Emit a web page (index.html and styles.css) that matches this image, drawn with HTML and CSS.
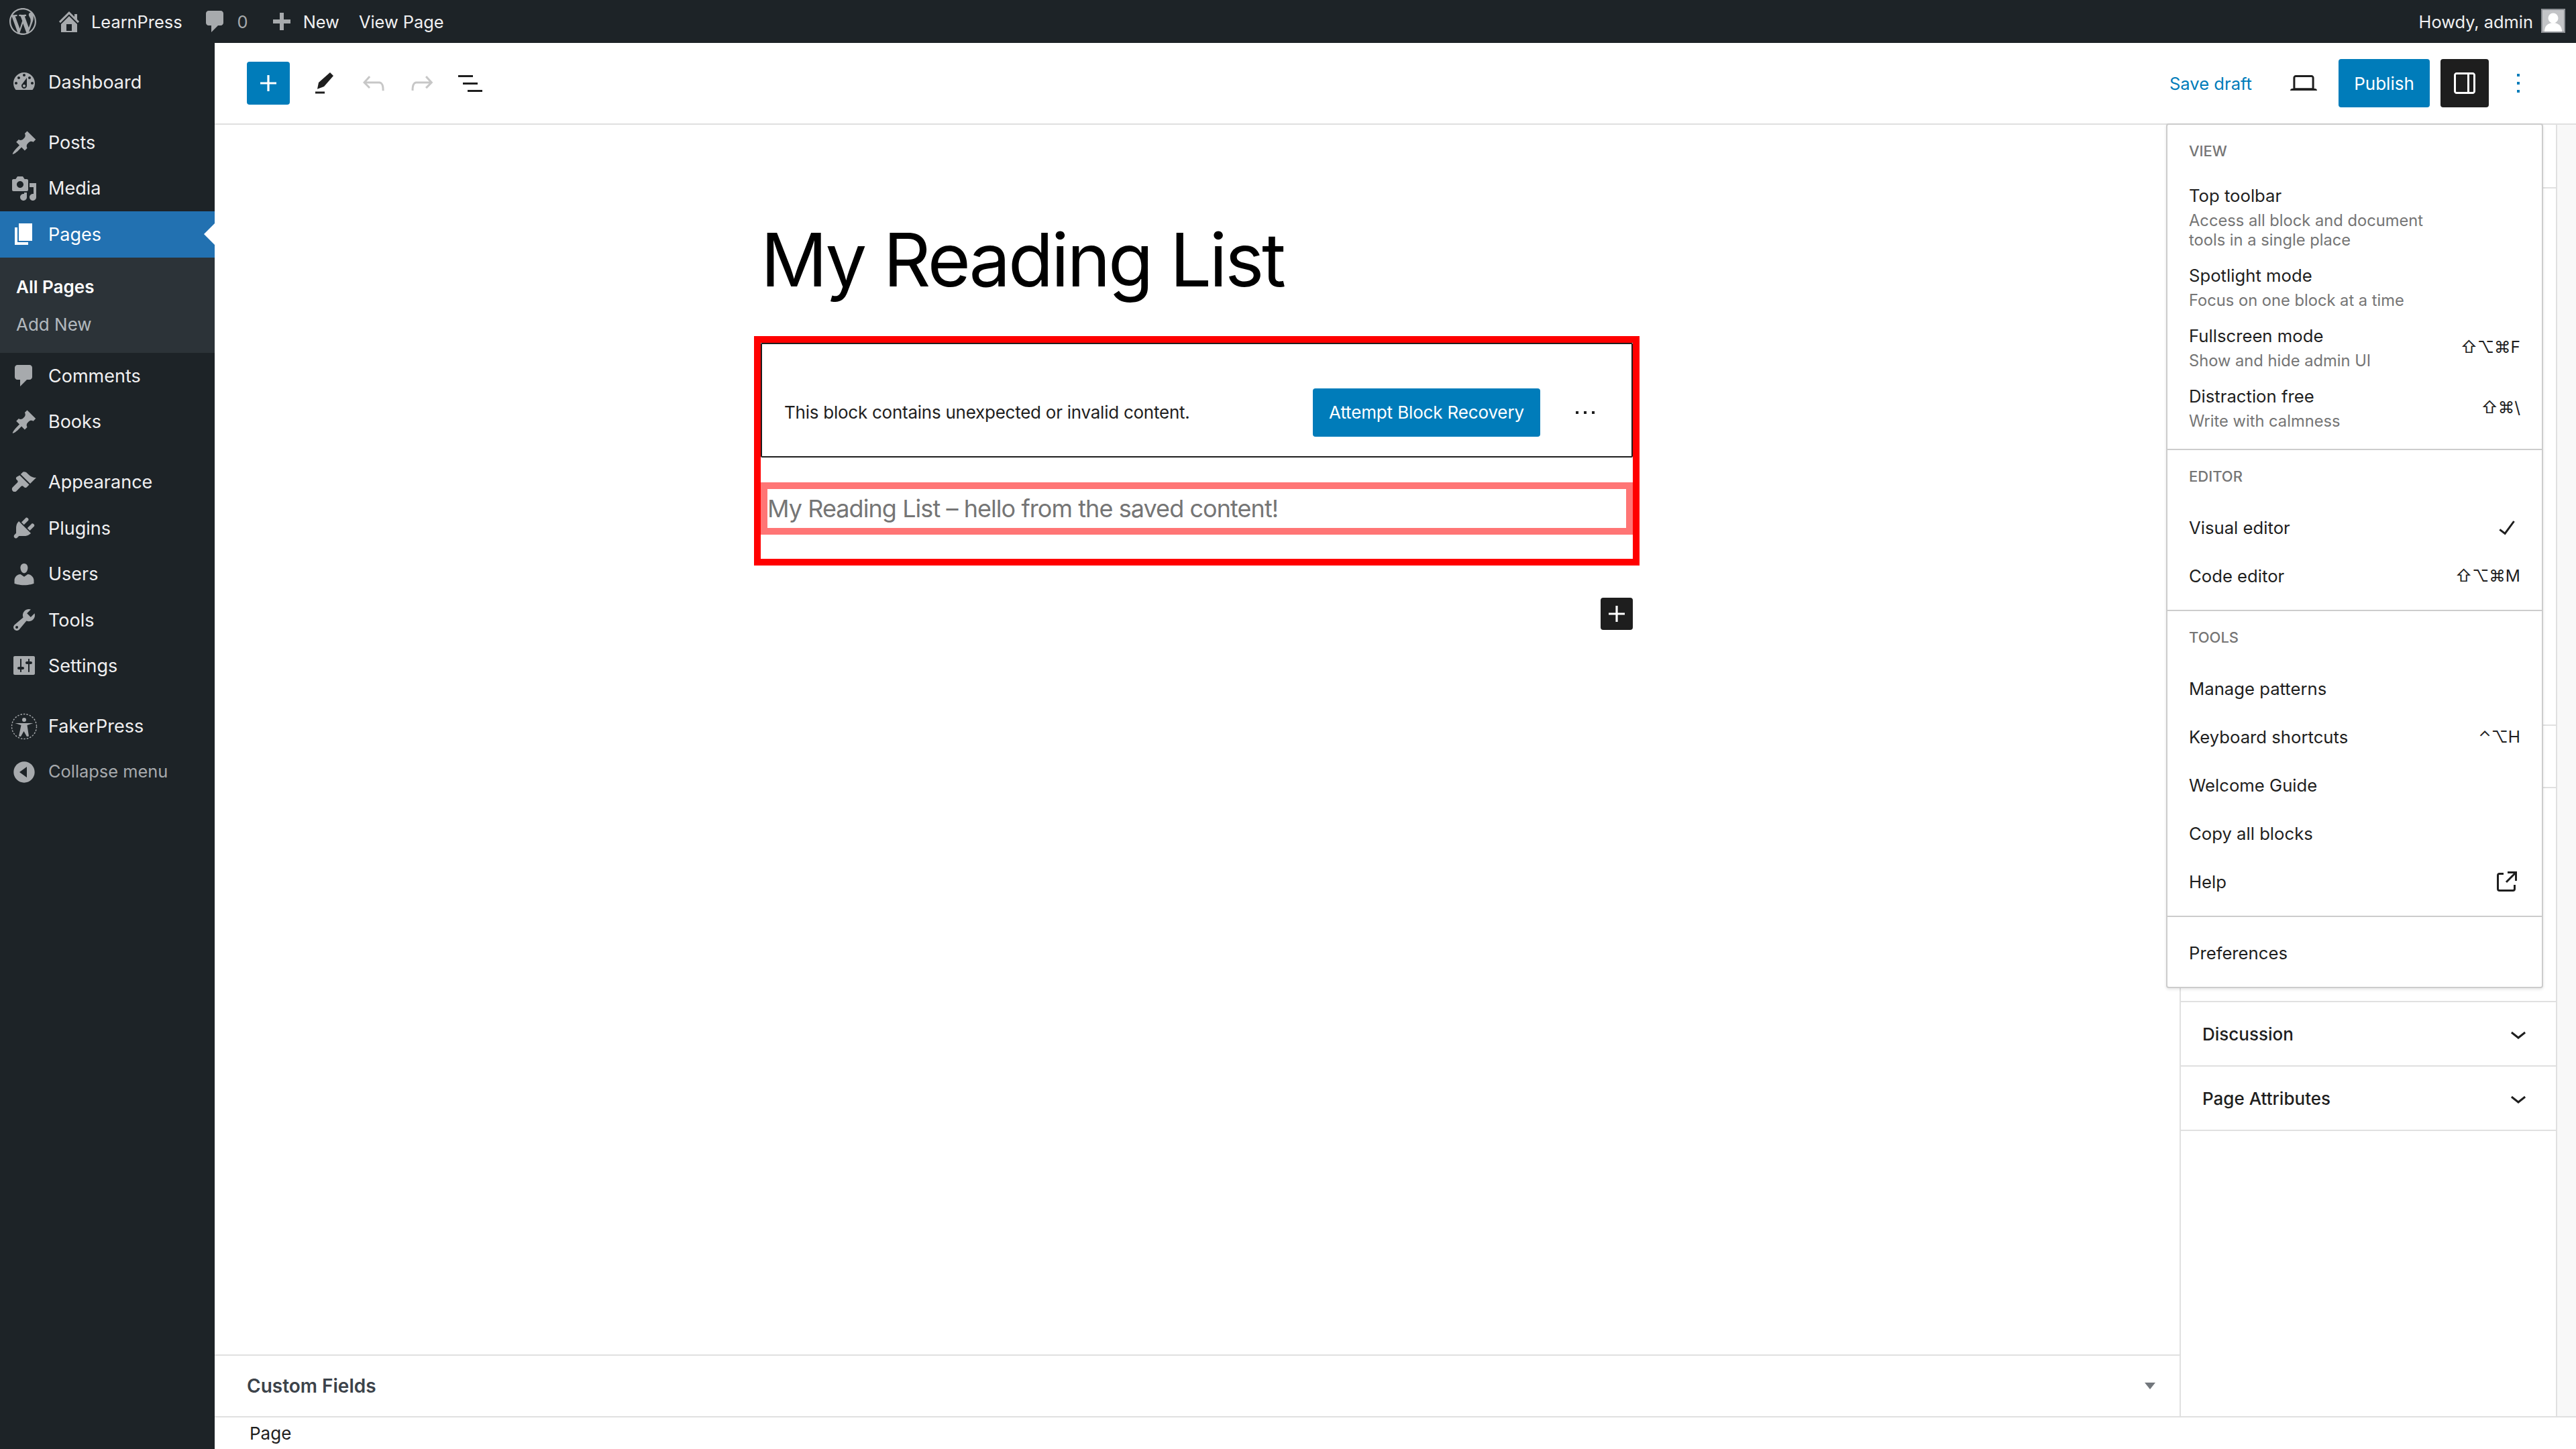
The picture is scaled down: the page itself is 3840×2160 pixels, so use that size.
FILE: index.html
```html
<!DOCTYPE html>
<html lang="en">
<head>
  <meta charset="UTF-8">
  <title>Edit Page - LearnPress</title>
  <link rel="stylesheet" href="styles.css">
</head>
<body>

<header class="adminbar">
  <svg class="bar-logo" viewBox="0 0 20 20"><path d="M20 10c0-5.510-4.490-10-10-10C4.480 0 0 4.490 0 10c0 5.520 4.480 10 10 10 5.510 0 10-4.480 10-10zM7.780 15.370L4.370 6.220c.550-.020 1.170-.080 1.170-.080.500-.060.440-1.130-.060-1.110 0 0-1.450.110-2.370.110-.180 0-.370 0-.580-.010C4.120 2.690 6.870 1.110 10 1.110c2.330 0 4.450.870 6.050 2.340-.680-.110-1.650.390-1.650 1.580 0 .740.450 1.360.900 2.100.350.610.550 1.360.550 2.460 0 1.490-1.400 5-1.400 5l-3.030-8.370c.540-.020.820-.170.820-.170.500-.050.440-1.250-.060-1.220 0 0-1.440.120-2.380.120-.870 0-2.330-.120-2.330-.120-.500-.030-.560 1.200-.060 1.220l.920.080 1.260 3.410zM17.410 10c.240-.640.740-1.870.430-4.250.700 1.290 1.050 2.710 1.050 4.250 0 3.290-1.730 6.240-4.400 7.780.970-2.590 1.940-5.210 2.920-7.780zM6.100 18.090C3.120 16.650 1.110 13.530 1.110 10c0-1.300.230-2.480.720-3.590C3.250 10.300 4.670 14.200 6.100 18.090zm4.030-6.630l2.580 6.980c-.860.290-1.760.450-2.710.450-.790 0-1.570-.110-2.290-.330.810-2.380 1.620-4.740 2.420-7.100z"/></svg>
  <div class="bar-item">
    <svg class="bar-icon" viewBox="0 0 20 20"><path d="M16 8.500l1.530 1.530-1.060 1.060L10 4.620l-6.470 6.470-1.060-1.060L10 2.500l4 4v-2h2v4zm-6-2.460l6 5.990V18H4v-5.970zM12 17v-5H8v5h4z"/></svg>
    <span>LearnPress</span>
  </div>
  <div class="bar-item">
    <svg class="bar-icon" viewBox="0 0 20 20"><path d="M5 2h9c1.100 0 2 .900 2 2v7c0 1.100-.900 2-2 2h-2l-5 5v-5H5c-1.100 0-2-.900-2-2V4c0-1.100.900-2 2-2z"/></svg>
    <span class="bar-count">0</span>
  </div>
  <div class="bar-item">
    <svg class="bar-icon" viewBox="0 0 20 20"><path d="M17 8.500v3h-5v5H9v-5H4v-3h5v-5h3v5h5z"/></svg>
    <span>New</span>
  </div>
  <div class="bar-item">View Page</div>
  <div class="bar-account">
    <span>Howdy, admin</span>
    <span class="avatar">
      <svg viewBox="0 0 32 32"><circle cx="16" cy="12" r="7.500"/><path d="M3 32c0-8 5-13 13-13s13 5 13 13z"/></svg>
    </span>
  </div>
</header>

<div class="layout">
  <nav class="sidemenu">
    <a class="side-item">
      <svg class="side-icon" viewBox="0 0 20 20"><path d="M3.760 16h12.480c1.100-1.370 1.760-3.110 1.760-5 0-4.420-3.580-8-8-8s-8 3.580-8 8c0 1.890.660 3.630 1.760 5zM10 4c.550 0 1 .450 1 1s-.450 1-1 1-1-.450-1-1 .450-1 1-1zM6 6c.550 0 1 .450 1 1s-.450 1-1 1-1-.450-1-1 .450-1 1-1zm8 0c.550 0 1 .450 1 1s-.450 1-1 1-1-.450-1-1 .450-1 1-1zm-5.370 5.550L12 7v6c0 1.100-.900 2-2 2s-2-.900-2-2c0-.570.240-1.080.630-1.450zM4 10c.550 0 1 .450 1 1s-.450 1-1 1-1-.450-1-1 .450-1 1-1zm12 0c.550 0 1 .450 1 1s-.450 1-1 1-1-.450-1-1 .450-1 1-1zm-5 3c0-.550-.450-1-1-1s-1 .450-1 1 .450 1 1 1 1-.450 1-1z" fill-rule="evenodd"/></svg>
      Dashboard
    </a>
    <div class="side-sep"></div>
    <a class="side-item">
      <svg class="side-icon" viewBox="0 0 20 20"><path d="M10.440 3.020l1.820-1.820 6.360 6.350-1.830 1.820c-1.050-.680-2.480-.570-3.410.360l-.750.750c-.920.930-1.040 2.350-.350 3.410l-1.830 1.820-2.410-2.410-2.800 2.790c-.420.420-3.380 2.710-3.800 2.290s1.860-3.390 2.280-3.810l2.790-2.790L4.100 9.360l1.830-1.820c1.050.690 2.480.570 3.400-.360l.750-.750c.930-.920 1.050-2.350.360-3.410z"/></svg>
      Posts
    </a>
    <a class="side-item">
      <svg class="side-icon" viewBox="0 0 20 20"><path fill-rule="evenodd" d="M13 11V4c0-.550-.450-1-1-1h-1.670L9 1H5L3.670 3H2c-.550 0-1 .450-1 1v7c0 .550.450 1 1 1h10c.550 0 1-.450 1-1zM7 4.500c1.380 0 2.500 1.120 2.500 2.500S8.380 9.500 7 9.500 4.500 8.380 4.500 7 5.620 4.500 7 4.500zM14 6h5v10.500c0 1.380-1.120 2.500-2.500 2.500S14 17.880 14 16.500s1.120-2.500 2.500-2.500c.170 0 .340.020.500.050V9h-3V6zm-4 8.050V13h2v3.500c0 1.380-1.120 2.500-2.500 2.500S7 17.880 7 16.500 8.120 14 9.500 14c.170 0 .340.020.500.050z"/></svg>
      Media
    </a>
    <a class="side-item side-current">
      <svg class="side-icon" viewBox="0 0 20 20"><path d="M6 15V2h10v13H6zm-1 1h8v2H3V5h2v11z"/></svg>
      Pages
    </a>
    <div class="side-sub">
      <a class="sub-item sub-active">All Pages</a>
      <a class="sub-item">Add New</a>
    </div>
    <a class="side-item">
      <svg class="side-icon" viewBox="0 0 20 20"><path d="M5 2h9c1.100 0 2 .900 2 2v7c0 1.100-.900 2-2 2h-2l-5 5v-5H5c-1.100 0-2-.900-2-2V4c0-1.100.900-2 2-2z"/></svg>
      Comments
    </a>
    <a class="side-item">
      <svg class="side-icon" viewBox="0 0 20 20"><path d="M10.440 3.020l1.820-1.820 6.360 6.350-1.830 1.820c-1.050-.680-2.480-.570-3.410.360l-.750.750c-.920.930-1.040 2.350-.350 3.410l-1.830 1.820-2.410-2.410-2.800 2.790c-.420.420-3.380 2.710-3.800 2.290s1.860-3.390 2.280-3.810l2.790-2.790L4.100 9.360l1.830-1.820c1.050.690 2.480.570 3.400-.360l.750-.750c.930-.920 1.050-2.350.360-3.410z"/></svg>
      Books
    </a>
    <div class="side-sep"></div>
    <a class="side-item">
      <svg class="side-icon" viewBox="0 0 20 20"><path d="M14.480 11.060L7.410 3.990l1.500-1.500c.500-.560 2.300-.470 3.540.840 1.250 1.320 3.500 3.300 6.550 3.170zM6.700 4.700l7.070 7.070-1.830 1.830c-.550.550-1.430.570-1.980.020l-.710-.710c-.380-.380-.980-.400-1.370-.020l-.030.020-3.540 3.540c-.780.780-2.050.780-2.830 0-.780-.780-.780-2.050 0-2.830l3.530-3.530c.390-.390.390-1.020 0-1.410l-.670-.680c-.550-.550-.530-1.430.020-1.980z"/></svg>
      Appearance
    </a>
    <a class="side-item">
      <svg class="side-icon" viewBox="0 0 20 20"><path d="M13.110 4.360L9.870 7.600 8 5.730l3.240-3.240c.350-.340 1.050-.200 1.560.320.520.510.660 1.210.310 1.550zm-8 1.770l.910-1.120 9.010 9.010-1.190.840c-.710.710-2.630 1.160-3.820 1.160H6.140L4.900 17.260c-.590.590-1.540.590-2.120 0-.590-.580-.590-1.530 0-2.120l1.240-1.240v-3.880c0-1.130.400-3.180 1.090-3.890zm7.260 3.970l3.240-3.240c.340-.350 1.040-.210 1.550.310.520.510.660 1.210.310 1.550l-3.240 3.250z"/></svg>
      Plugins
    </a>
    <a class="side-item">
      <svg class="side-icon" viewBox="0 0 20 20"><path d="M10 9.250c-2.270 0-2.730-3.440-2.730-3.440C7 4.020 7.820 2 9.970 2c2.160 0 2.980 2.020 2.710 3.810 0 0-.410 3.440-2.680 3.440zm0 2.570L12.720 10c2.390 0 4.520 2.330 4.520 4.530v2.490s-3.650 1.130-7.240 1.130c-3.650 0-7.240-1.130-7.240-1.130v-2.490c0-2.250 1.940-4.480 4.470-4.480z"/></svg>
      Users
    </a>
    <a class="side-item">
      <svg class="side-icon" viewBox="0 0 20 20"><path fill-rule="evenodd" d="M16.680 9.770c-1.340 1.340-3.300 1.670-4.950.990l-5.410 6.520c-.990.990-2.590.990-3.570 0-.990-.990-.990-2.590 0-3.570l6.520-5.420c-.680-1.650-.350-3.610.990-4.950 1.280-1.280 3.120-1.620 4.720-1.060l-2.890 2.890 2.820 2.820 2.860-2.870c.530 1.580.180 3.400-1.090 4.670zM3.810 16.210c.400.390 1.030.390 1.420 0 .400-.400.400-1.030 0-1.430-.390-.390-1.020-.390-1.420 0-.390.400-.390 1.030 0 1.430z"/></svg>
      Tools
    </a>
    <a class="side-item">
      <svg class="side-icon" viewBox="0 0 20 20"><path fill-rule="evenodd" d="M18 16V4c0-.550-.450-1-1-1H3c-.550 0-1 .450-1 1v12c0 .550.450 1 1 1h14c.550 0 1-.450 1-1zM8 11h1c.550 0 1 .450 1 1s-.450 1-1 1H8v1.500c0 .280-.220.500-.500.500s-.500-.220-.500-.500V13H6c-.550 0-1-.450-1-1s.450-1 1-1h1V5.500c0-.280.220-.500.500-.500s.500.220.500.500V11zm5-2h-1c-.550 0-1-.450-1-1s.450-1 1-1h1V5.500c0-.280.220-.500.500-.500s.500.220.500.500V7h1c.550 0 1 .450 1 1s-.450 1-1 1h-1v5.500c0 .280-.220.500-.500.500s-.500-.220-.500-.500V9z"/></svg>
      Settings
    </a>
    <div class="side-sep"></div>
    <a class="side-item">
      <svg class="side-icon" viewBox="0 0 40 40">
        <circle class="faker-ring" cx="20" cy="20" r="18.500"/>
        <circle cx="20" cy="10" r="3"/>
        <path d="M6.500 15h27l-9 3 2.500 16.500-3 .5-4.500-8-4.500 8-3-.5L15.500 18z"/>
      </svg>
      FakerPress
    </a>
    <a class="side-item side-collapse">
      <svg class="side-icon" viewBox="0 0 20 20"><path fill-rule="evenodd" d="M10 2.160c4.330 0 7.840 3.510 7.840 7.840s-3.510 7.840-7.840 7.840S2.160 14.330 2.160 10 5.670 2.160 10 2.160zM12 6l-5.500 4 5.500 4V6z"/></svg>
      Collapse menu
    </a>
  </nav>

  <main class="editor">
    <div class="topbar">
      <button class="inserter">
        <svg class="gb-icon" viewBox="0 0 24 24"><path d="M18 11.200h-5.200V6h-1.600v5.200H6v1.600h5.200V18h1.600v-5.200H18z"/></svg>
      </button>
      <span class="tool">
        <svg class="gb-icon" viewBox="0 0 24 24"><path d="M15.500 4L18 6.500 11 14.500 6 16.400 7 11.500zM4.500 18.200h7v1.500h-7z"/></svg>
      </span>
      <span class="tool tool-off">
        <svg class="gb-icon" viewBox="0 0 24 24"><path d="M18.300 11.700c-.6-.6-1.400-.9-2.300-.9H6.700l2.900-3.300-1.100-1-4.500 5L8.500 16l1-1-2.700-2.700H16c.5 0 .9.200 1.300.5 1 1 1 3.400 1 4.500v.3h1.500v-.2c0-1.500 0-4.300-1.500-5.700z"/></svg>
      </span>
      <span class="tool tool-off">
        <svg class="gb-icon" viewBox="0 0 24 24"><path d="M15.600 6.500l-1.100 1 2.900 3.300H8c-.9 0-1.700.3-2.300.9-1.400 1.500-1.400 4.200-1.400 5.600v.2h1.500v-.3c0-1.100 0-3.500 1-4.500.3-.3.7-.5 1.300-.5h9.200L14.500 15l1.100 1.100 4.600-4.600-4.600-5z"/></svg>
      </span>
      <span class="tool">
        <svg class="gb-icon" viewBox="0 0 24 24"><path d="M3 6h11v1.500H3V6zm3.500 5.500h11V13h-11v-1.500zM21 17H10v1.500h11V17z"/></svg>
      </span>

      <div class="topbar-right">
        <a class="save-draft">Save draft</a>
        <span class="tool tool-preview">
          <svg class="gb-icon" viewBox="0 0 24 24"><path d="M20.500 16h-.7V8c0-1.100-.9-2-2-2H6.200c-1.100 0-2 .9-2 2v8h-.7c-.8 0-1.500.7-1.500 1.500h20c0-.8-.7-1.500-1.500-1.500zM5.700 8c0-.3.200-.5.500-.5h11.600c.3 0 .5.200.5.500v7.600H5.700V8z"/></svg>
        </span>
        <button class="publish">Publish</button>
        <button class="sidebar-toggle">
          <svg class="gb-icon" viewBox="0 0 24 24"><path d="M18 4H6c-1.100 0-2 .9-2 2v12c0 1.100.9 2 2 2h12c1.100 0 2-.9 2-2V6c0-1.100-.9-2-2-2zm-4 14.500H6c-.3 0-.5-.2-.5-.5V6c0-.3.200-.5.500-.5h8v13zm4.500-.5c0 .3-.2.500-.5.500h-2.500v-13H18c.3 0 .5.200.5.500v12z"/></svg>
        </button>
        <span class="tool tool-kebab">
          <svg class="gb-icon" viewBox="0 0 24 24"><path d="M13 19h-2v-2h2v2zm0-6h-2v-2h2v2zm0-6h-2V5h2v2z"/></svg>
        </span>
      </div>
    </div>

    <div class="workspace">
      <div class="canvas-col">
        <div class="canvas">
          <h1 class="post-title">My Reading List</h1>
          <div class="invalid-frame">
            <div class="warning">
              <p class="warning-text">This block contains unexpected or invalid content.</p>
              <button class="recover">Attempt Block Recovery</button>
              <svg class="gb-icon warning-more" viewBox="0 0 24 24"><path d="M11 13h2v-2h-2v2zm-6 0h2v-2H5v2zm12-2v2h2v-2h-2z"/></svg>
            </div>
            <div class="saved-content">My Reading List – hello from the saved content!</div>
          </div>
          <div class="append-row">
            <button class="append">
              <svg class="gb-icon" viewBox="0 0 24 24"><path d="M18 11.200h-5.200V6h-1.600v5.200H6v1.600h5.200V18h1.600v-5.200H18z"/></svg>
            </button>
          </div>
        </div>
        <div class="metabox">
          <span>Custom Fields</span>
          <i class="metabox-arrow"></i>
        </div>
      </div>

      <aside class="panel">
        <div class="panel-row panel-tabs"></div>
        <div class="panel-row panel-a"></div>
        <div class="panel-row panel-b"></div>
        <div class="panel-row panel-c"></div>
        <div class="panel-row panel-fold">
          Discussion
          <svg class="gb-icon" viewBox="0 0 24 24"><path d="M17.500 11.600L12 16l-5.500-4.400.9-1.200L12 14l4.600-3.600.9 1.200z"/></svg>
        </div>
        <div class="panel-row panel-fold">
          Page Attributes
          <svg class="gb-icon" viewBox="0 0 24 24"><path d="M17.500 11.600L12 16l-5.500-4.400.9-1.200L12 14l4.600-3.600.9 1.200z"/></svg>
        </div>
      </aside>
      <div class="scroll-strip"></div>

      <div class="options-menu">
        <div class="menu-group">
          <div class="menu-label">View</div>
          <div class="menu-item menu-item-desc">
            <div><div class="item-name">Top toolbar</div><div class="item-desc">Access all block and document tools in a single place</div></div>
          </div>
          <div class="menu-item menu-item-desc">
            <div><div class="item-name">Spotlight mode</div><div class="item-desc">Focus on one block at a time</div></div>
          </div>
          <div class="menu-item menu-item-desc">
            <div><div class="item-name">Fullscreen mode</div><div class="item-desc">Show and hide admin UI</div></div>
            <span class="shortcut">⇧⌥⌘F</span>
          </div>
          <div class="menu-item menu-item-desc">
            <div><div class="item-name">Distraction free</div><div class="item-desc">Write with calmness</div></div>
            <span class="shortcut">⇧⌘\</span>
          </div>
        </div>
        <div class="menu-group">
          <div class="menu-label">Editor</div>
          <div class="menu-item">
            <span>Visual editor</span>
            <svg class="gb-icon item-icon" viewBox="0 0 24 24"><path d="M16.700 7.100l-6.300 8.500-3.300-2.500-.9 1.200 4.500 3.400L17.900 7.900z"/></svg>
          </div>
          <div class="menu-item"><span>Code editor</span><span class="shortcut">⇧⌥⌘M</span></div>
        </div>
        <div class="menu-group">
          <div class="menu-label">Tools</div>
          <div class="menu-item"><span>Manage patterns</span></div>
          <div class="menu-item"><span>Keyboard shortcuts</span><span class="shortcut">⌃⌥H</span></div>
          <div class="menu-item"><span>Welcome Guide</span></div>
          <div class="menu-item"><span>Copy all blocks</span></div>
          <div class="menu-item">
            <span>Help</span>
            <svg class="gb-icon item-icon" viewBox="0 0 24 24"><path d="M19.500 4.500h-7V6h4.440l-5.970 5.970 1.060 1.060L18 7.060v4.440h1.500v-7Zm-13 1a2 2 0 0 0-2 2v10a2 2 0 0 0 2 2h10a2 2 0 0 0 2-2v-3H17v3a.5.5 0 0 1-.5.5h-10a.5.5 0 0 1-.5-.5v-10a.5.5 0 0 1 .5-.5h3V5.500h-3Z"/></svg>
          </div>
        </div>
        <div class="menu-group">
          <div class="menu-item"><span>Preferences</span></div>
        </div>
      </div>
    </div>

    <div class="breadcrumb">Page</div>
  </main>
</div>

</body>
</html>
```

FILE: styles.css
```css
* {
  box-sizing: border-box;
}

html,
body {
  margin: 0;
  height: 2160px;
  overflow: hidden;
}

body {
  font-family: Inter, "DejaVu Sans", sans-serif;
  font-size: 26px;
  color: #1e1e1e;
  background-color: #fff;
}

button {
  font-family: inherit;
  border: none;
  padding: 0;
}

.gb-icon {
  width: 48px;
  height: 48px;
  fill: currentColor;
  flex: none;
}

/* admin bar */
.adminbar {
  height: 64px;
  background-color: #1d2327;
  color: #f0f0f1;
  display: flex;
  align-items: center;
  padding-left: 14px;
  font-size: 25.4px;
}

.bar-logo {
  width: 40px;
  height: 40px;
  fill: #a7aaad;
  margin-right: 29px;
}

.bar-item {
  display: flex;
  align-items: center;
  margin-right: 29px;
}

.bar-icon {
  width: 40px;
  height: 40px;
  fill: #a7aaad;
  margin-right: 13px;
}

.bar-count {
  color: #a7aaad;
}

.bar-account {
  margin-left: auto;
  display: flex;
  align-items: center;
  padding-right: 16px;
}

.avatar {
  width: 36px;
  height: 36px;
  margin-left: 12px;
  margin-top: -2px;
  background-color: #c3c4c7;
  border: 2px solid #8c8f94;
  display: block;
  overflow: hidden;
}

.avatar svg {
  display: block;
  width: 100%;
  height: 100%;
  fill: #fff;
}

/* left menu */
.layout {
  display: flex;
  height: 2096px;
}

.sidemenu {
  width: 320px;
  flex: none;
  background-color: #1d2327;
  padding-top: 24px;
  color: #f0f0f1;
}

.side-item {
  position: relative;
  display: flex;
  align-items: center;
  height: 68.4px;
  padding-left: 16px;
  font-size: 27px;
}

.side-icon {
  width: 40px;
  height: 40px;
  fill: #a7aaad;
  margin-right: 16px;
  flex: none;
}

.side-sep {
  height: 22px;
}

.side-current {
  background-color: #2271b1;
  color: #fff;
}

.side-current .side-icon {
  fill: #fff;
}

.side-current::after {
  content: "";
  position: absolute;
  right: 0;
  top: 18px;
  border: 16px solid transparent;
  border-left-width: 0;
  border-right-color: #fff;
}

.side-sub {
  background-color: #2c3338;
  padding: 16px 0 14.4px;
}

.sub-item {
  display: flex;
  align-items: center;
  height: 56px;
  padding-left: 24px;
  color: rgba(240, 246, 252, 0.7);
}

.sub-active {
  color: #fff;
  font-weight: 600;
}

.side-collapse {
  height: 64px;
  color: #a7aaad;
  font-size: 25.4px;
}

.side-collapse .side-icon {
  margin-top: 4px;
}

.faker-ring {
  fill: none;
  stroke: #a7aaad;
  stroke-width: 1.4;
  stroke-dasharray: 2.500 2;
}

/* editor header */
.editor {
  position: relative;
  flex: 1;
  min-width: 0;
  display: flex;
  flex-direction: column;
}

.topbar {
  height: 122px;
  flex: none;
  border-bottom: 2px solid #e0e0e0;
  display: flex;
  align-items: center;
  padding-left: 48px;
}

.inserter {
  width: 64px;
  height: 64px;
  background-color: #007cba;
  color: #fff;
  border-radius: 4px;
  display: flex;
  align-items: center;
  justify-content: center;
  margin-right: 17px;
}

.tool {
  width: 72px;
  display: flex;
  align-items: center;
  justify-content: center;
  color: #1e1e1e;
}

.tool-off {
  color: #c7c7c7;
}

.topbar-right {
  margin-left: auto;
  display: flex;
  align-items: center;
  padding-right: 62px;
}

.save-draft {
  color: #007cba;
  margin-right: 53px;
  font-size: 25.6px;
}

.tool-preview {
  width: 48px;
  margin-right: 28px;
}

.publish {
  width: 136px;
  height: 72px;
  background-color: #007cba;
  color: #fff;
  font-size: 26px;
  border-radius: 4px;
  margin-right: 16px;
}

.sidebar-toggle {
  width: 72px;
  height: 72px;
  background-color: #1e1e1e;
  color: #fff;
  border-radius: 4px;
  display: flex;
  align-items: center;
  justify-content: center;
  margin-right: 20px;
}

.tool-kebab {
  width: 48px;
  color: #007cba;
}

/* canvas */
.workspace {
  position: relative;
  flex: 1;
  min-height: 0;
  display: flex;
}

.canvas-col {
  flex: 1;
  min-width: 0;
  display: flex;
  flex-direction: column;
  border-right: 2px solid #e0e0e0;
}

.canvas {
  flex: 1;
  width: 1320px;
  margin-left: 804px;
  padding-top: 134px;
}

.post-title {
  margin: 0 10px 47px;
  font-size: 110px;
  font-weight: 400;
  line-height: 134px;
  letter-spacing: -3.3px;
  color: #000;
}

.invalid-frame {
  border: 10px solid #f00;
  height: 342px;
}

.warning {
  height: 171px;
  border: 2px solid #1e1e1e;
  border-radius: 2px;
  display: flex;
  align-items: center;
  padding: 36px 0 0 33px;
}

.warning-text {
  margin: 0;
  flex: 1;
  letter-spacing: -0.25px;
}

.recover {
  width: 339px;
  height: 72px;
  background-color: #007cba;
  color: #fff;
  font-size: 26px;
  letter-spacing: -0.15px;
  border-radius: 4px;
  margin-right: 43px;
}

.warning-more {
  margin-right: 45px;
}

.saved-content {
  margin-top: 37px;
  height: 78px;
  border: 10px solid #ff7575;
  display: flex;
  align-items: center;
  font-size: 36px;
  letter-spacing: -0.94px;
  color: #757575;
}

.append-row {
  display: flex;
  justify-content: flex-end;
  padding: 48px 10px 0 0;
}

.append {
  width: 48px;
  height: 48px;
  background-color: #1e1e1e;
  color: #fff;
  border-radius: 4px;
  display: flex;
  align-items: center;
  justify-content: center;
}

.metabox {
  height: 92px;
  flex: none;
  border-top: 2px solid #e0e0e0;
  display: flex;
  align-items: center;
  justify-content: space-between;
  padding: 0 36px 0 48px;
  font-size: 28px;
  font-weight: 600;
  color: #3c434a;
}

.metabox-arrow {
  border: 8px solid transparent;
  border-top: 10px solid #72777c;
  border-bottom-width: 0;
}

.breadcrumb {
  height: 49px;
  flex: none;
  border-top: 2px solid #e0e0e0;
  padding-left: 52px;
  display: flex;
  align-items: center;
}

/* right panel */
.panel {
  width: 561px;
  flex: none;
  border-right: 2px solid #e0e0e0;
}

.panel-row {
  border-bottom: 2px solid #e0e0e0;
}

.panel-tabs {
  height: 95px;
}

.panel-a {
  height: 801px;
}

.panel-b {
  height: 93px;
}

.panel-c {
  height: 319px;
}

.panel-fold {
  height: 96px;
  display: flex;
  align-items: center;
  justify-content: space-between;
  padding: 0 32px;
  font-weight: 500;
}

.scroll-strip {
  width: 28px;
  flex: none;
  background-color: #f8f8f8;
}

/* options dropdown */
.options-menu {
  position: absolute;
  top: -2px;
  right: 49px;
  width: 562px;
  background-color: #fff;
  border: 2px solid #ccc;
  border-radius: 4px;
  box-shadow: 0 2px 4px rgba(0, 0, 0, 0.1);
  font-size: 25.7px;
}

.menu-group {
  padding: 16px;
  border-bottom: 2px solid #ccc;
}

.menu-group:last-child {
  border-bottom: none;
}

.menu-label {
  height: 46px;
  margin-bottom: 16px;
  padding-left: 16px;
  display: flex;
  align-items: center;
  font-size: 22px;
  font-weight: 500;
  text-transform: uppercase;
  color: #757575;
}

.menu-item {
  height: 72px;
  padding: 2px 16px 0;
  display: flex;
  align-items: center;
  justify-content: space-between;
}

.menu-item-desc {
  height: auto;
  padding-top: 8px;
  padding-bottom: 11px;
}

.item-name {
  line-height: 40px;
}

.item-desc {
  margin-top: 2px;
  max-width: 380px;
  font-size: 23.7px;
  line-height: 29px;
  color: #757575;
}

.shortcut {
  color: #1e1e1e;
  font-size: 24.5px;
}

.item-icon {
  margin-right: -4px;
}
```
